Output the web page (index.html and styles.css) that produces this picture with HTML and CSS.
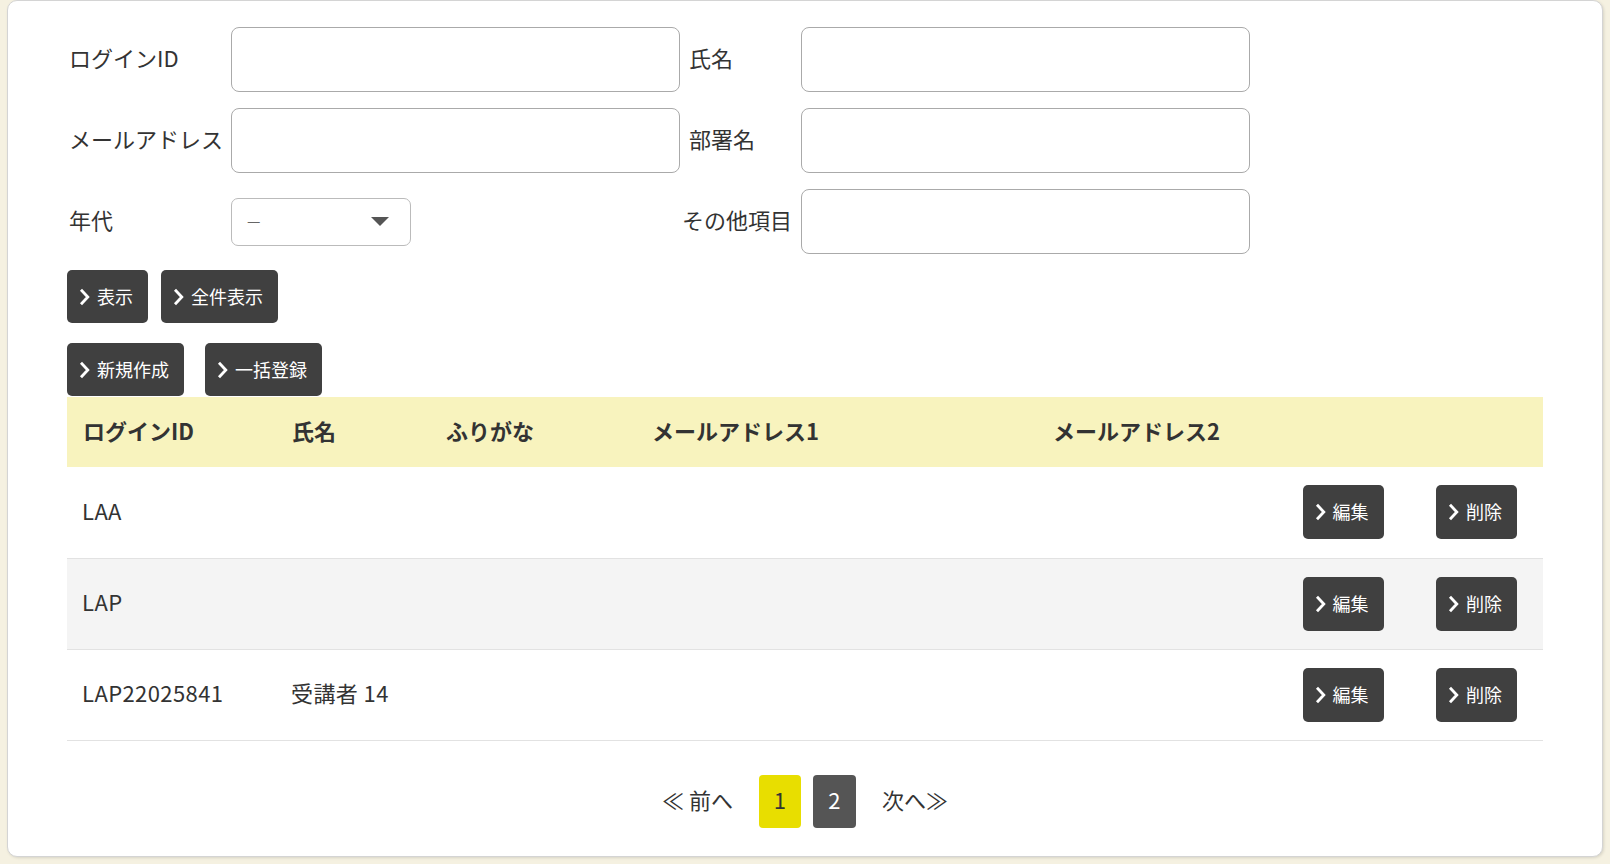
FILE: index.html
```html
<!DOCTYPE html>
<html lang="ja">
<head>
  <meta charset="UTF-8">
  <meta name="viewport" content="width=device-width, initial-scale=1.0">
  <title>ユーザー一覧</title>
  <link rel="stylesheet" href="styles.css">
</head>
<body>
  <div class="container">
    <form class="search-form">
      <label class="form-label">ログインID</label>
      <input class="text-input" type="text">
      <label class="form-label form-label-right">氏名</label>
      <input class="text-input" type="text">

      <label class="form-label">メールアドレス</label>
      <input class="text-input" type="text">
      <label class="form-label form-label-right">部署名</label>
      <input class="text-input" type="text">

      <label class="form-label">年代</label>
      <div class="select-wrap">
        <select class="select-box">
          <option>—</option>
        </select>
      </div>
      <label class="form-label form-label-right form-label-wide">その他項目</label>
      <input class="text-input" type="text">
    </form>

    <div class="btn-row">
      <button class="btn"><svg class="chevron" viewBox="0 0 11 18"><polyline points="2,1.8 8.8,9 2,16.2"/></svg>表示</button>
      <button class="btn"><svg class="chevron" viewBox="0 0 11 18"><polyline points="2,1.8 8.8,9 2,16.2"/></svg>全件表示</button>
    </div>
    <div class="btn-row btn-row-wide">
      <button class="btn"><svg class="chevron" viewBox="0 0 11 18"><polyline points="2,1.8 8.8,9 2,16.2"/></svg>新規作成</button>
      <button class="btn"><svg class="chevron" viewBox="0 0 11 18"><polyline points="2,1.8 8.8,9 2,16.2"/></svg>一括登録</button>
    </div>

    <table class="user-table">
      <colgroup>
        <col style="width:209px">
        <col style="width:154px">
        <col style="width:206px">
        <col style="width:401px">
        <col style="width:239px">
        <col style="width:134px">
        <col style="width:133px">
      </colgroup>
      <thead>
        <tr>
          <th>ログインID</th>
          <th>氏名</th>
          <th>ふりがな</th>
          <th>メールアドレス1</th>
          <th>メールアドレス2</th>
          <th></th>
          <th></th>
        </tr>
      </thead>
      <tbody>
        <tr>
          <td>LAA</td>
          <td></td>
          <td></td>
          <td></td>
          <td></td>
          <td class="action"><button class="btn btn-small"><svg class="chevron" viewBox="0 0 11 18"><polyline points="2,1.8 8.8,9 2,16.2"/></svg>編集</button></td>
          <td class="action"><button class="btn btn-small"><svg class="chevron" viewBox="0 0 11 18"><polyline points="2,1.8 8.8,9 2,16.2"/></svg>削除</button></td>
        </tr>
        <tr>
          <td>LAP</td>
          <td></td>
          <td></td>
          <td></td>
          <td></td>
          <td class="action"><button class="btn btn-small"><svg class="chevron" viewBox="0 0 11 18"><polyline points="2,1.8 8.8,9 2,16.2"/></svg>編集</button></td>
          <td class="action"><button class="btn btn-small"><svg class="chevron" viewBox="0 0 11 18"><polyline points="2,1.8 8.8,9 2,16.2"/></svg>削除</button></td>
        </tr>
        <tr>
          <td>LAP22025841</td>
          <td>受講者 14</td>
          <td></td>
          <td></td>
          <td></td>
          <td class="action"><button class="btn btn-small"><svg class="chevron" viewBox="0 0 11 18"><polyline points="2,1.8 8.8,9 2,16.2"/></svg>編集</button></td>
          <td class="action"><button class="btn btn-small"><svg class="chevron" viewBox="0 0 11 18"><polyline points="2,1.8 8.8,9 2,16.2"/></svg>削除</button></td>
        </tr>
      </tbody>
    </table>

    <div class="pager">
      <a class="page-link page-prev">≪ 前へ</a>
      <span class="page-num current">1</span>
      <a class="page-num">2</a>
      <a class="page-link page-next">次へ≫</a>
    </div>
  </div>
</body>
</html>
```

FILE: styles.css
```css
* {
  box-sizing: border-box;
}
body {
  margin: 0;
  padding: 0 7px 7px;
  background-color: #f5f1e1;
  font-family: "Noto Sans CJK JP", "Noto Sans", sans-serif;
  color: #333;
}
.container {
  background-color: #fff;
  border: 1px solid #d4d4d4;
  border-radius: 10px;
  box-shadow: 1px 1px 3px rgba(0,0,0,0.12);
  padding: 26px 59px 0;
  height: 857px;
}
.search-form {
  display: grid;
  grid-template-columns: 164px 449px 121px 449px;
  grid-auto-rows: 65px;
  row-gap: 16px;
  align-items: center;
}
.form-label {
  font-size: 22px;
  padding: 0 0 6px 2px;
  white-space: nowrap;
}
.form-label-right {
  padding-left: 9px;
}
.form-label-wide {
  margin-left: -7px;
}
.text-input {
  width: 100%;
  height: 65px;
  border: 1px solid #aaa;
  border-radius: 8px;
  background-color: #fff;
}
.select-wrap {
  position: relative;
  width: 180px;
  height: 48px;
}
.select-box {
  appearance: none;
  -webkit-appearance: none;
  width: 100%;
  height: 100%;
  border: 1px solid #bbb;
  border-radius: 7px;
  background-color: #fff;
  padding: 0 0 2px 15px;
  font-family: inherit;
  font-size: 15px;
  color: #666;
}
.select-wrap::after {
  content: "";
  position: absolute;
  right: 22px;
  top: 19px;
  border-left: 9px solid transparent;
  border-right: 9px solid transparent;
  border-top: 9px solid #555;
  pointer-events: none;
}
.btn-row {
  display: flex;
  gap: 13px;
  margin-top: 16px;
}
.btn-row-wide {
  gap: 21px;
  margin-top: 20px;
}
.btn {
  display: inline-flex;
  align-items: center;
  gap: 7px;
  height: 53px;
  padding: 0 15px 2px 12px;
  background-color: #404040;
  color: #fff;
  border: none;
  border-radius: 5px;
  font-family: inherit;
  font-size: 18px;
  cursor: pointer;
}
.chevron {
  width: 11px;
  height: 18px;
  margin-top: 2px;
  fill: none;
  stroke: #fff;
  stroke-width: 2.8;
}
.btn-small {
  height: 54px;
}
.user-table {
  width: 100%;
  border-collapse: collapse;
  table-layout: fixed;
  margin-top: 1px;
}
.user-table th {
  height: 70px;
  background-color: #f8f3be;
  text-align: left;
  padding: 0 0 5px 16px;
  font-size: 22px;
  font-weight: bold;
  white-space: nowrap;
}
.user-table td {
  height: 91px;
  padding: 0 0 5px 15px;
  font-size: 22px;
  letter-spacing: 0.4px;
  border-bottom: 1px solid #e2e2e2;
  white-space: nowrap;
}
.user-table tbody tr:nth-child(2) {
  background-color: #f4f4f4;
}
.user-table td.action {
  padding: 0;
  letter-spacing: 0;
  text-align: center;
}
.pager {
  display: flex;
  justify-content: center;
  align-items: center;
  gap: 12px;
  margin-top: 34px;
}
.page-link {
  font-size: 22px;
  color: #333;
  padding-bottom: 5px;
  cursor: pointer;
}
.page-prev {
  margin-right: 14px;
}
.page-next {
  margin-left: 14px;
}
.page-num {
  display: flex;
  align-items: center;
  justify-content: center;
  width: 43px;
  height: 53px;
  padding-bottom: 4px;
  border-radius: 4px;
  background-color: #555;
  color: #fff;
  font-size: 22px;
  cursor: pointer;
}
.page-num.current {
  width: 42px;
  background-color: #e8de00;
  color: #333;
}
```
